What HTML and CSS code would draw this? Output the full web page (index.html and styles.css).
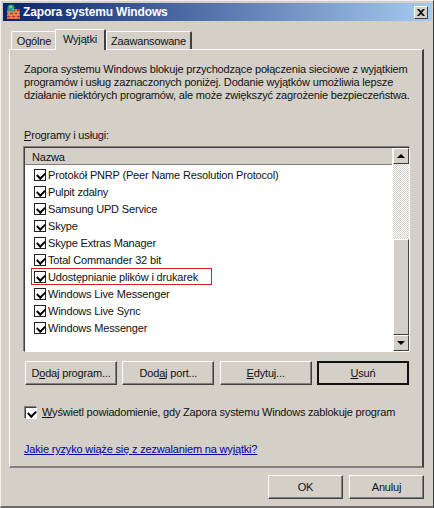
FILE: index.html
```html
<!DOCTYPE html>
<html lang="pl">
<head>
    <meta charset="UTF-8">
    <title>Zapora systemu Windows</title>
    <link rel="stylesheet" href="styles.css">
</head>
<body>
<div class="window">
    <div class="titlebar">
        <svg class="title-icon" width="16" height="16" viewBox="0 0 16 16">
            <rect x="2" y="5" width="13" height="10" fill="#b5382a"/>
            <path d="M2 8h13M2 11h13M2 14h13M6 5v3M11 5v3M4 8v3M9 8v3M13 8v3M6 11v3M11 11v3" stroke="#f0b080" stroke-width="1" fill="none"/>
            <circle cx="6" cy="4" r="3.5" fill="#2f9a8c"/>
            <path d="M4 2h3v2H5zM7 5h2v1H7z" fill="#8fd06a"/>
        </svg>
        <span class="title-text">Zapora systemu Windows</span>
        <button class="close-button">
            <svg width="8" height="7" viewBox="0 0 8 7"><path d="M0 0h2l2 2 2-2h2L5 3.5 8 7H6L4 5 2 7H0l3-3.5z" fill="#000"/></svg>
        </button>
    </div>

    <div class="content">
        <div class="tabs">
            <div class="tab">Ogólne</div>
            <div class="tab active">Wyjątki</div>
            <div class="tab">Zaawansowane</div>
        </div>

        <div class="panel">
            <p class="description">Zapora systemu Windows blokuje przychodzące połączenia sieciowe z wyjątkiem<br>programów i usług zaznaczonych poniżej. Dodanie wyjątków umożliwia lepsze<br>działanie niektórych programów, ale może zwiększyć zagrożenie bezpieczeństwa.</p>

            <div class="list-label"><u>P</u>rogramy i usługi:</div>

            <div class="listbox">
                <div class="list-main">
                    <div class="list-header">Nazwa</div>
                    <div class="list-rows">
                        <div class="row"><span class="check"></span>Protokół PNRP (Peer Name Resolution Protocol)</div>
                        <div class="row"><span class="check"></span>Pulpit zdalny</div>
                        <div class="row"><span class="check"></span>Samsung UPD Service</div>
                        <div class="row"><span class="check"></span>Skype</div>
                        <div class="row"><span class="check"></span>Skype Extras Manager</div>
                        <div class="row"><span class="check"></span>Total Commander 32 bit</div>
                        <div class="row"><span class="check"></span>Udostępnianie plików i drukarek<span class="highlight"></span></div>
                        <div class="row"><span class="check"></span>Windows Live Messenger</div>
                        <div class="row"><span class="check"></span>Windows Live Sync</div>
                        <div class="row"><span class="check"></span>Windows Messenger</div>
                    </div>
                </div>
                <div class="scrollbar">
                    <div class="scroll-btn"><span class="arrow-up"></span></div>
                    <div class="scroll-track"></div>
                    <div class="scroll-thumb"></div>
                    <div class="scroll-btn"><span class="arrow-down"></span></div>
                </div>
            </div>

            <div class="list-buttons">
                <button class="win-button">D<u>o</u>daj program...</button>
                <button class="win-button">Dod<u>a</u>j port...</button>
                <button class="win-button"><u>E</u>dytuj...</button>
                <button class="win-button default"><u>U</u>suń</button>
            </div>

            <label class="notify"><span class="check"></span><span><u>W</u>yświetl powiadomienie, gdy Zapora systemu Windows zablokuje program</span></label>

            <a class="risk-link" href="#">Jakie ryzyko wiąże się z zezwalaniem na wyjątki?</a>
        </div>

        <div class="footer">
            <button class="win-button wide">OK</button>
            <button class="win-button wide">Anuluj</button>
        </div>
    </div>
</div>
</body>
</html>
```

FILE: styles.css
```css
:root {
    --face: #d4d0c8;
    --shadow: #808080;
    --dark: #404040;
    --text: #111111;
}

* {
    margin: 0;
    padding: 0;
    box-sizing: border-box;
}

body {
    width: 434px;
    height: 508px;
    overflow: hidden;
    background-color: var(--face);
    font-family: "Liberation Sans", Arial, sans-serif;
    font-size: 11px;
    letter-spacing: -0.17px;
    color: var(--text);
}

.window {
    height: 508px;
    padding: 2px 1px 3px 2px;
    background-color: var(--face);
    border-top: 1px solid #f0eee8;
    border-left: 1px solid #f0eee8;
    border-right: 1px solid var(--dark);
    border-bottom: 2px solid #6a6a6a;
    display: flex;
    flex-direction: column;
}

.titlebar {
    height: 18px;
    display: flex;
    align-items: center;
    padding: 0 4px 0 2px;
    background: linear-gradient(to right, #0a246a, #a6caf0);
}

.title-icon {
    margin-right: 2px;
    flex-shrink: 0;
}

.title-text {
    flex: 1;
    color: white;
    font-weight: 700;
    font-size: 12px;
    letter-spacing: -0.15px;
}

.close-button {
    width: 14px;
    height: 13px;
    display: flex;
    align-items: center;
    justify-content: center;
    background-color: var(--face);
    border: 1px solid;
    border-color: white var(--dark) var(--dark) white;
}

.content {
    flex: 1;
    padding: 8px 8px 0 6px;
    display: flex;
    flex-direction: column;
}

.tabs {
    display: flex;
    height: 20px;
    padding-left: 2px;
    position: relative;
    z-index: 1;
}

.tab {
    height: 18px;
    margin-top: 2px;
    padding-top: 3px;
    text-align: center;
    background-color: var(--face);
    border: 1px solid white;
    border-bottom: none;
    border-right: 2px solid var(--dark);
    border-radius: 2px 2px 0 0;
    white-space: nowrap;
}

.tab:nth-child(1) {
    width: 45px;
    border-right: none;
}

.tab.active {
    width: 51px;
    height: 21px;
    margin-top: 0;
    padding-top: 3px;
    margin-left: -1px;
}

.tab:nth-child(3) {
    width: 86px;
}

.panel {
    height: 419px;
    padding: 13px 12px 0 14px;
    background-color: var(--face);
    border: 1px solid white;
    border-right: 2px solid var(--dark);
    border-bottom: 2px solid var(--shadow);
    display: flex;
    flex-direction: column;
}

.description {
    line-height: 13px;
    height: 39px;
    white-space: nowrap;
}

.list-label {
    margin-top: 27px;
    line-height: 13px;
    height: 18px;
}

.listbox {
    height: 205px;
    display: flex;
    background-color: white;
    border: 1px solid;
    border-color: var(--dark) white white var(--dark);
    box-shadow: -1px -1px 0 var(--shadow);
}

.list-main {
    flex: 1;
    min-width: 0;
}

.list-header {
    height: 17px;
    padding: 3px 0 0 7px;
    line-height: 13px;
    background-color: var(--face);
    border-bottom: 1px solid var(--shadow);
}

.list-rows {
    padding-top: 1px;
}

.row {
    height: 17px;
    display: flex;
    align-items: center;
    padding-left: 9px;
    position: relative;
    white-space: nowrap;
}

.check {
    width: 12px;
    height: 12px;
    margin-right: 2px;
    flex-shrink: 0;
    background-color: white;
    border: 1px solid #222;
    position: relative;
}

.check::after {
    content: "";
    position: absolute;
    left: 3px;
    top: 1px;
    width: 4px;
    height: 6px;
    border: solid #000;
    border-width: 0 2px 2px 0;
    transform: rotate(45deg);
}

.highlight {
    position: absolute;
    left: 6px;
    top: 0;
    width: 181px;
    height: 17px;
    border: 1px solid #d01f2e;
}

.scrollbar {
    width: 17px;
    display: flex;
    flex-direction: column;
    border-left: 1px solid white;
}

.scroll-btn,
.scroll-thumb {
    background-color: var(--face);
    border: 1px solid;
    border-color: white var(--dark) var(--dark) white;
}

.scroll-btn {
    height: 16px;
    flex-shrink: 0;
    display: flex;
    align-items: center;
    justify-content: center;
}

.scroll-track {
    height: 75px;
    background-color: #e9e7e2;
    background-image: repeating-conic-gradient(var(--face) 0 25%, white 0 50%);
    background-size: 2px 2px;
}

.scroll-thumb {
    flex: 1;
}

.arrow-up,
.arrow-down {
    width: 0;
    height: 0;
    border-left: 4px solid transparent;
    border-right: 4px solid transparent;
}

.arrow-up {
    border-bottom: 4px solid #000;
}

.arrow-down {
    border-top: 4px solid #000;
}

.list-buttons {
    margin-top: 9px;
    display: flex;
    justify-content: space-between;
    padding: 0 1px;
}

.win-button {
    width: 92px;
    height: 24px;
    font-family: inherit;
    font-size: 11px;
    letter-spacing: -0.17px;
    color: var(--text);
    background-color: var(--face);
    border: 1px solid;
    border-color: white var(--dark) var(--dark) white;
    box-shadow: inset -1px -1px 0 var(--shadow);
}

.win-button.default {
    border: 2px solid #111;
    box-shadow: none;
}

.notify {
    margin-top: 21px;
    display: flex;
    align-items: center;
    line-height: 13px;
    letter-spacing: -0.2px;
    white-space: nowrap;
}

.notify .check {
    margin: 0 5px 0 1px;
    border-color: var(--dark) white white var(--dark);
    box-shadow: -1px -1px 0 var(--shadow);
}

.risk-link {
    margin-top: 24px;
    line-height: 13px;
    color: #0000a0;
}

.footer {
    margin-top: 7px;
    display: flex;
    justify-content: flex-end;
    gap: 6px;
}

.win-button.wide {
    width: 75px;
}
```
